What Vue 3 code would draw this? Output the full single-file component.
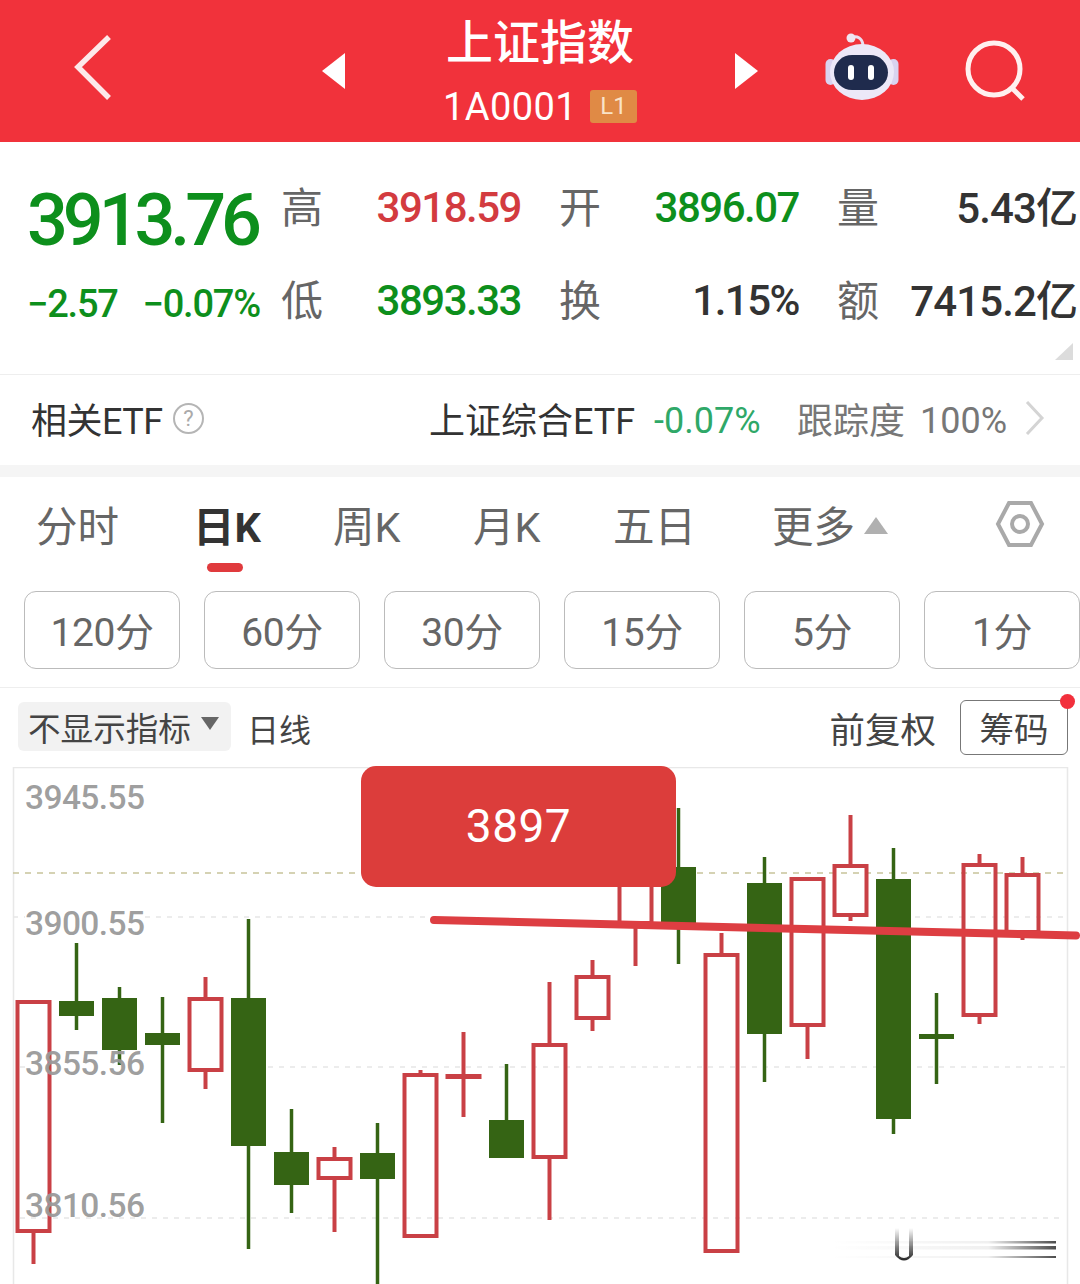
<script setup>
const tabs = ['分时', '日K', '周K', '月K', '五日']
const periods = ['120分', '60分', '30分', '15分', '5分', '1分']

const axis = [
  { label: '3945.55', y: 809 },
  { label: '3900.55', y: 935 },
  { label: '3855.56', y: 1075 },
  { label: '3810.56', y: 1217 }
]

// hi, top, bottom, lo in page pixels; up = red hollow candle
const raw = [
  [1000, 1000, 1233, 1264, true],
  [943, 1001, 1016, 1030, false],
  [987, 998, 1050, 1065, false],
  [997, 1033, 1045, 1123, false],
  [977, 997, 1072, 1089, true],
  [919, 998, 1146, 1249, false],
  [1109, 1152, 1185, 1213, false],
  [1147, 1157, 1180, 1232, true],
  [1123, 1153, 1179, 1284, false],
  [1070, 1073, 1238, 1238, true],
  [1032, 1074, 1079, 1117, true],
  [1064, 1120, 1158, 1158, false],
  [982, 1043, 1159, 1220, true],
  [960, 975, 1020, 1031, true],
  [860, 860, 925, 966, true],
  [808, 867, 926, 964, false],
  [933, 953, 1253, 1253, true],
  [857, 883, 1034, 1082, false],
  [877, 877, 1027, 1059, true],
  [815, 864, 917, 921, true],
  [848, 879, 1119, 1134, false],
  [993, 1034, 1039, 1084, false],
  [854, 863, 1017, 1024, true],
  [857, 873, 934, 940, true]
]

const candles = raw.map(([hi, top, bottom, lo, up], i) => ({
  x: 33.5 + i * 43,
  hi,
  top,
  bottom,
  lo,
  up
}))

const greyLines = [
  [13, 25, 917], [145, 430, 917], [915, 1065, 917],
  [20, 25, 1067], [268, 1065, 1067],
  [20, 1065, 1218]
]
</script>

<template>
  <div class="page">
    <header class="top">
      <svg class="back" width="44" height="70" viewBox="0 0 44 70">
        <path d="M36 4 L5 34 L36 65" fill="none" stroke="#fde9ea" stroke-width="5.5" />
      </svg>
      <svg class="arrow" width="24" height="36" viewBox="0 0 24 36"><path d="M23 0V36L0 18Z" fill="#fff" /></svg>
      <div class="title">
        <div class="name">上证指数</div>
        <div class="code">1A0001<span class="badge">L1</span></div>
      </div>
      <svg class="arrow" width="24" height="36" viewBox="0 0 24 36"><path d="M1 0V36L24 18Z" fill="#fff" /></svg>
      <svg class="robot" width="74" height="68" viewBox="0 0 74 68">
        <path d="M26 6 C32 3 37 6 38 13" fill="none" stroke="#eadff0" stroke-width="3" />
        <circle cx="26" cy="6" r="4.5" fill="#efe6f2" />
        <rect x="0.5" y="27" width="10" height="26" rx="5" fill="#d9d3f0" />
        <rect x="63.5" y="27" width="10" height="26" rx="5" fill="#d9d3f0" />
        <ellipse cx="37" cy="40" rx="32" ry="28" fill="#ece8f8" />
        <rect x="9" y="23" width="54" height="35" rx="18" fill="#1f2b4d" />
        <rect x="23" y="33" width="6" height="15" rx="3" fill="#fff" />
        <rect x="43" y="33" width="6" height="15" rx="3" fill="#fff" />
      </svg>
      <svg class="search" width="64" height="64" viewBox="0 0 64 64">
        <circle cx="29" cy="29" r="26" fill="none" stroke="#fff0ef" stroke-width="5" />
        <path d="M48 49 L58 59" stroke="#fff0ef" stroke-width="5" />
      </svg>
    </header>

    <section class="stats">
      <div class="quote">
        <div class="price">3913.76</div>
        <div class="change"><span>−2.57</span><span>−0.07%</span></div>
      </div>
      <div class="cells">
        <div class="cell"><span class="key">高</span><span class="val red">3918.59</span></div>
        <div class="cell"><span class="key">开</span><span class="val green">3896.07</span></div>
        <div class="cell"><span class="key">量</span><span class="val dark">5.43亿</span></div>
        <div class="cell"><span class="key">低</span><span class="val green">3893.33</span></div>
        <div class="cell"><span class="key">换</span><span class="val">1.15%</span></div>
        <div class="cell"><span class="key">额</span><span class="val dark">7415.2亿</span></div>
      </div>
      <span class="corner"></span>
    </section>

    <section class="etf">
      <span class="etf-title">相关ETF</span>
      <span class="help">?</span>
      <span class="etf-name">上证综合ETF</span>
      <span class="etf-rate">-0.07%</span>
      <span class="etf-track">跟踪度</span>
      <span class="etf-track pct">100%</span>
      <svg class="more" width="20" height="34" viewBox="0 0 20 34">
        <path d="M2 1 L17 17 L2 33" fill="none" stroke="#d4d4d4" stroke-width="3" />
      </svg>
    </section>

    <nav class="tabs">
      <span v-for="t in tabs" :key="t" class="tab" :class="{ active: t === '日K' }">{{ t }}</span>
      <span class="tab">更多<i class="up"></i></span>
      <svg class="hex" width="50" height="48" viewBox="0 0 50 48">
        <path d="M14 3 H36 L47 24 L36 45 H14 L3 24 Z" fill="none" stroke="#a9a9a9" stroke-width="4" />
        <circle cx="25" cy="24" r="8" fill="none" stroke="#a9a9a9" stroke-width="4" />
      </svg>
    </nav>

    <div class="periods">
      <button v-for="p in periods" :key="p" class="period">{{ p }}</button>
    </div>

    <div class="tools">
      <span class="pill">不显示指标<i class="down"></i></span>
      <span class="line-type">日线</span>
      <span class="adjust">前复权</span>
      <span class="chips">筹码<i class="dot"></i></span>
    </div>

    <div class="chart">
      <svg width="1080" height="517" viewBox="0 767 1080 517">
        <defs>
          <linearGradient id="fade" x1="0" x2="1" y1="0" y2="0">
            <stop offset="0" stop-color="#000" stop-opacity="0" />
            <stop offset="0.7" stop-color="#000" stop-opacity="0.06" />
            <stop offset="1" stop-color="#000" stop-opacity="0.7" />
          </linearGradient>
          <linearGradient id="fadeDown" x1="0" x2="0" y1="0" y2="1">
            <stop offset="0" stop-color="#000" stop-opacity="0" />
            <stop offset="1" stop-color="#000" stop-opacity="0.85" />
          </linearGradient>
        </defs>

        <path d="M13.5 1284 V767.5 H1067.5 V1284" fill="none" stroke="#e8e8e8" stroke-width="1.5" />
        <line
          v-for="(g, i) in greyLines"
          :key="i"
          :x1="g[0]"
          :x2="g[1]"
          :y1="g[2]"
          :y2="g[2]"
          stroke="#e6e6e6"
          stroke-width="1.5"
          stroke-dasharray="5 6"
        />
        <line x1="13" x2="1065" y1="873" y2="873" stroke="#c8c49a" stroke-width="1.5" stroke-dasharray="6 6" />

        <g v-for="(c, i) in candles" :key="i">
          <template v-if="c.up">
            <line v-if="c.hi < c.top" :x1="c.x" :x2="c.x" :y1="c.hi" :y2="c.top" stroke="#c94045" stroke-width="4" />
            <line v-if="c.lo > c.bottom" :x1="c.x" :x2="c.x" :y1="c.bottom" :y2="c.lo" stroke="#c94045" stroke-width="4" />
            <rect
              :x="c.x - 16"
              :y="c.top + 2"
              width="32"
              :height="Math.max(c.bottom - c.top - 4, 0.5)"
              fill="none"
              stroke="#c94045"
              stroke-width="4"
            />
          </template>
          <template v-else>
            <line :x1="c.x" :x2="c.x" :y1="c.hi" :y2="c.lo" stroke="#356414" stroke-width="3.5" />
            <rect :x="c.x - 17.5" :y="c.top" width="35" :height="c.bottom - c.top" fill="#356414" />
          </template>
        </g>

        <text v-for="a in axis" :key="a.label" x="25" :y="a.y" class="axis">{{ a.label }}</text>

        <path d="M434 920 L1076 935.5" stroke="#dd3e42" stroke-width="8" stroke-linecap="round" />

        <!-- blurred watermark, bottom right -->
        <rect x="830" y="1241" width="226" height="2.5" fill="url(#fade)" />
        <rect x="830" y="1246" width="226" height="3.5" fill="url(#fade)" />
        <rect x="830" y="1256" width="226" height="2" fill="url(#fade)" />
        <path d="M895 1228 V1255 Q904 1266 913 1255 V1228 H909 V1256 Q904 1260 899 1256 V1228 Z" fill="url(#fadeDown)" />
      </svg>
      <div class="tip">3897</div>
    </div>
  </div>
</template>

<style>
html,
body {
  margin: 0;
  background: #fff;
  overflow: hidden;
}
</style>

<style scoped>
.page {
  width: 1080px;
  height: 1284px;
  overflow: hidden;
  background: #fff;
  font-family: Roboto, "Noto Sans CJK SC", sans-serif;
  color: #333;
}

.top {
  height: 142px;
  background: #f1323b;
  display: flex;
  align-items: center;
  color: #fff;
}
.back {
  margin-left: 73px;
  margin-top: -6px;
}
.top .arrow:nth-of-type(2) {
  margin-left: 205px;
}
.title {
  width: 388px;
  text-align: center;
}
.name {
  font-size: 47px;
  line-height: 60px;
  margin-top: -1px;
  font-weight: 500;
}
.code {
  font-size: 38px;
  line-height: 44px;
  margin-top: 12px;
  display: flex;
  justify-content: center;
  align-items: center;
  letter-spacing: 0.4px;
}
.badge {
  width: 47px;
  height: 33px;
  line-height: 33px;
  margin-left: 13px;
  background: #e08a45;
  border-radius: 3px;
  font-size: 24px;
  color: #f9e3c8;
  letter-spacing: 0;
}
.robot {
  margin-left: 67px;
  margin-top: -10px;
}
.search {
  margin-left: 66px;
  margin-top: 2px;
}

.stats {
  position: relative;
  box-sizing: border-box;
  height: 233px;
  padding: 35px 0 0 27px;
  display: flex;
  border-bottom: 1px solid #eee;
}
.quote {
  width: 254px;
  color: #0d8f1c;
}
.price {
  width: 233px;
  height: 84px;
  line-height: 88px;
  font-size: 72px;
  font-weight: 500;
  letter-spacing: -5.1px;
  white-space: nowrap;
}
.change {
  width: 233px;
  display: flex;
  justify-content: space-between;
  margin-top: 13px;
  line-height: 60px;
  font-size: 38px;
  font-weight: 500;
  letter-spacing: -1.2px;
  white-space: nowrap;
}
.cells {
  display: grid;
  grid-template-columns: repeat(3, 240px);
  column-gap: 38px;
  row-gap: 33px;
  height: 153px;
}
.cell {
  display: flex;
  justify-content: space-between;
  align-items: center;
  height: 60px;
}
.key {
  font-size: 42px;
  color: #666;
  margin-top: -6px;
}
.val {
  font-size: 42px;
  font-weight: 500;
  letter-spacing: -1.5px;
  white-space: nowrap;
}
.dark {
  letter-spacing: -0.9px;
  margin-top: -6px;
}
.red {
  color: #d33b3f;
}
.green {
  color: #0d8f1c;
}
.corner {
  position: absolute;
  right: 7px;
  bottom: 14px;
  width: 0;
  height: 0;
  border-left: 18px solid transparent;
  border-bottom: 17px solid #dcdcdc;
}

.etf {
  box-sizing: border-box;
  height: 102px;
  padding-bottom: 4px;
  border-bottom: 12px solid #f5f5f5;
  display: flex;
  align-items: center;
  font-size: 36px;
  padding-left: 31px;
}
.etf-title {
  width: 131px;
  letter-spacing: -0.5px;
  white-space: nowrap;
}
.help {
  box-sizing: border-box;
  width: 31px;
  height: 31px;
  margin-left: 11px;
  border: 2px solid #b5b5b5;
  border-radius: 50%;
  color: #aaa;
  font-size: 22px;
  line-height: 27px;
  text-align: center;
}
.etf-name {
  margin-left: 225px;
  width: 225px;
  white-space: nowrap;
}
.etf-rate {
  width: 143px;
  margin-top: 6px;
  color: #2fa868;
}
.etf-track {
  color: #777;
  width: 123px;
  white-space: nowrap;
}
.pct {
  width: 105px;
  margin-top: 6px;
}

.tabs {
  box-sizing: border-box;
  height: 114px;
  padding: 0 35px 20px 36px;
  display: grid;
  grid-template-columns: 160px 137px 140px 140px 159px 1fr auto;
  align-items: center;
  font-size: 41.5px;
  color: #666;
}
.tab {
  position: relative;
  white-space: nowrap;
}
.tab.active {
  left: -3px;
  color: #333;
  font-weight: 700;
}
.tab.active::after {
  content: "";
  position: absolute;
  left: 14px;
  top: 69px;
  width: 36px;
  height: 9px;
  border-radius: 5px;
  background: #e03a3d;
}
.up {
  display: inline-block;
  margin-left: 9px;
  vertical-align: 8px;
  border-left: 12px solid transparent;
  border-right: 12px solid transparent;
  border-bottom: 17px solid #b0b0b0;
}

.periods {
  box-sizing: border-box;
  height: 97px;
  padding-left: 24px;
  display: flex;
  gap: 24px;
  border-bottom: 1px solid #eee;
}
.period {
  box-sizing: border-box;
  flex: none;
  width: 156px;
  height: 78px;
  padding: 0 0 3px;
  border: 1px solid #bbb;
  border-radius: 12px;
  background: #fff;
  color: #666;
  font: 39px Roboto, "Noto Sans CJK SC", sans-serif;
  letter-spacing: -0.4px;
}

.tools {
  height: 79px;
  display: flex;
  align-items: center;
  padding-left: 18px;
  color: #444;
}
.pill {
  box-sizing: border-box;
  width: 213px;
  height: 49px;
  padding-left: 10px;
  margin-top: -2px;
  background: #f2f2f2;
  border-radius: 6px;
  font-size: 32.6px;
  line-height: 57px;
  white-space: nowrap;
}
.down {
  display: inline-block;
  margin-left: 10px;
  vertical-align: 11px;
  border-left: 9px solid transparent;
  border-right: 9px solid transparent;
  border-top: 13px solid #666;
}
.line-type {
  margin-left: 16px;
  font-size: 32px;
}
.adjust {
  margin-left: auto;
  font-size: 35.5px;
}
.chips {
  position: relative;
  box-sizing: border-box;
  width: 108px;
  height: 55px;
  margin: -1px 12px 0 24px;
  border: 1px solid #777;
  border-radius: 6px;
  font-size: 34.5px;
  line-height: 59px;
  text-align: center;
}
.dot {
  position: absolute;
  right: -8px;
  top: -7px;
  width: 15px;
  height: 15px;
  border-radius: 50%;
  background: #f2303c;
}

.chart {
  position: relative;
  height: 517px;
}
.chart svg {
  display: block;
}
.axis {
  font-family: Roboto, sans-serif;
  font-size: 33.5px;
  font-weight: 500;
  letter-spacing: -0.6px;
  fill: #999;
  fill-opacity: 0.95;
}
.tip {
  position: absolute;
  left: 361px;
  top: -1px;
  width: 315px;
  height: 121px;
  border-radius: 15px;
  background: #dc3d3b;
  color: #fff;
  font-size: 46px;
  line-height: 120px;
  text-align: center;
  letter-spacing: 0.5px;
}
</style>
